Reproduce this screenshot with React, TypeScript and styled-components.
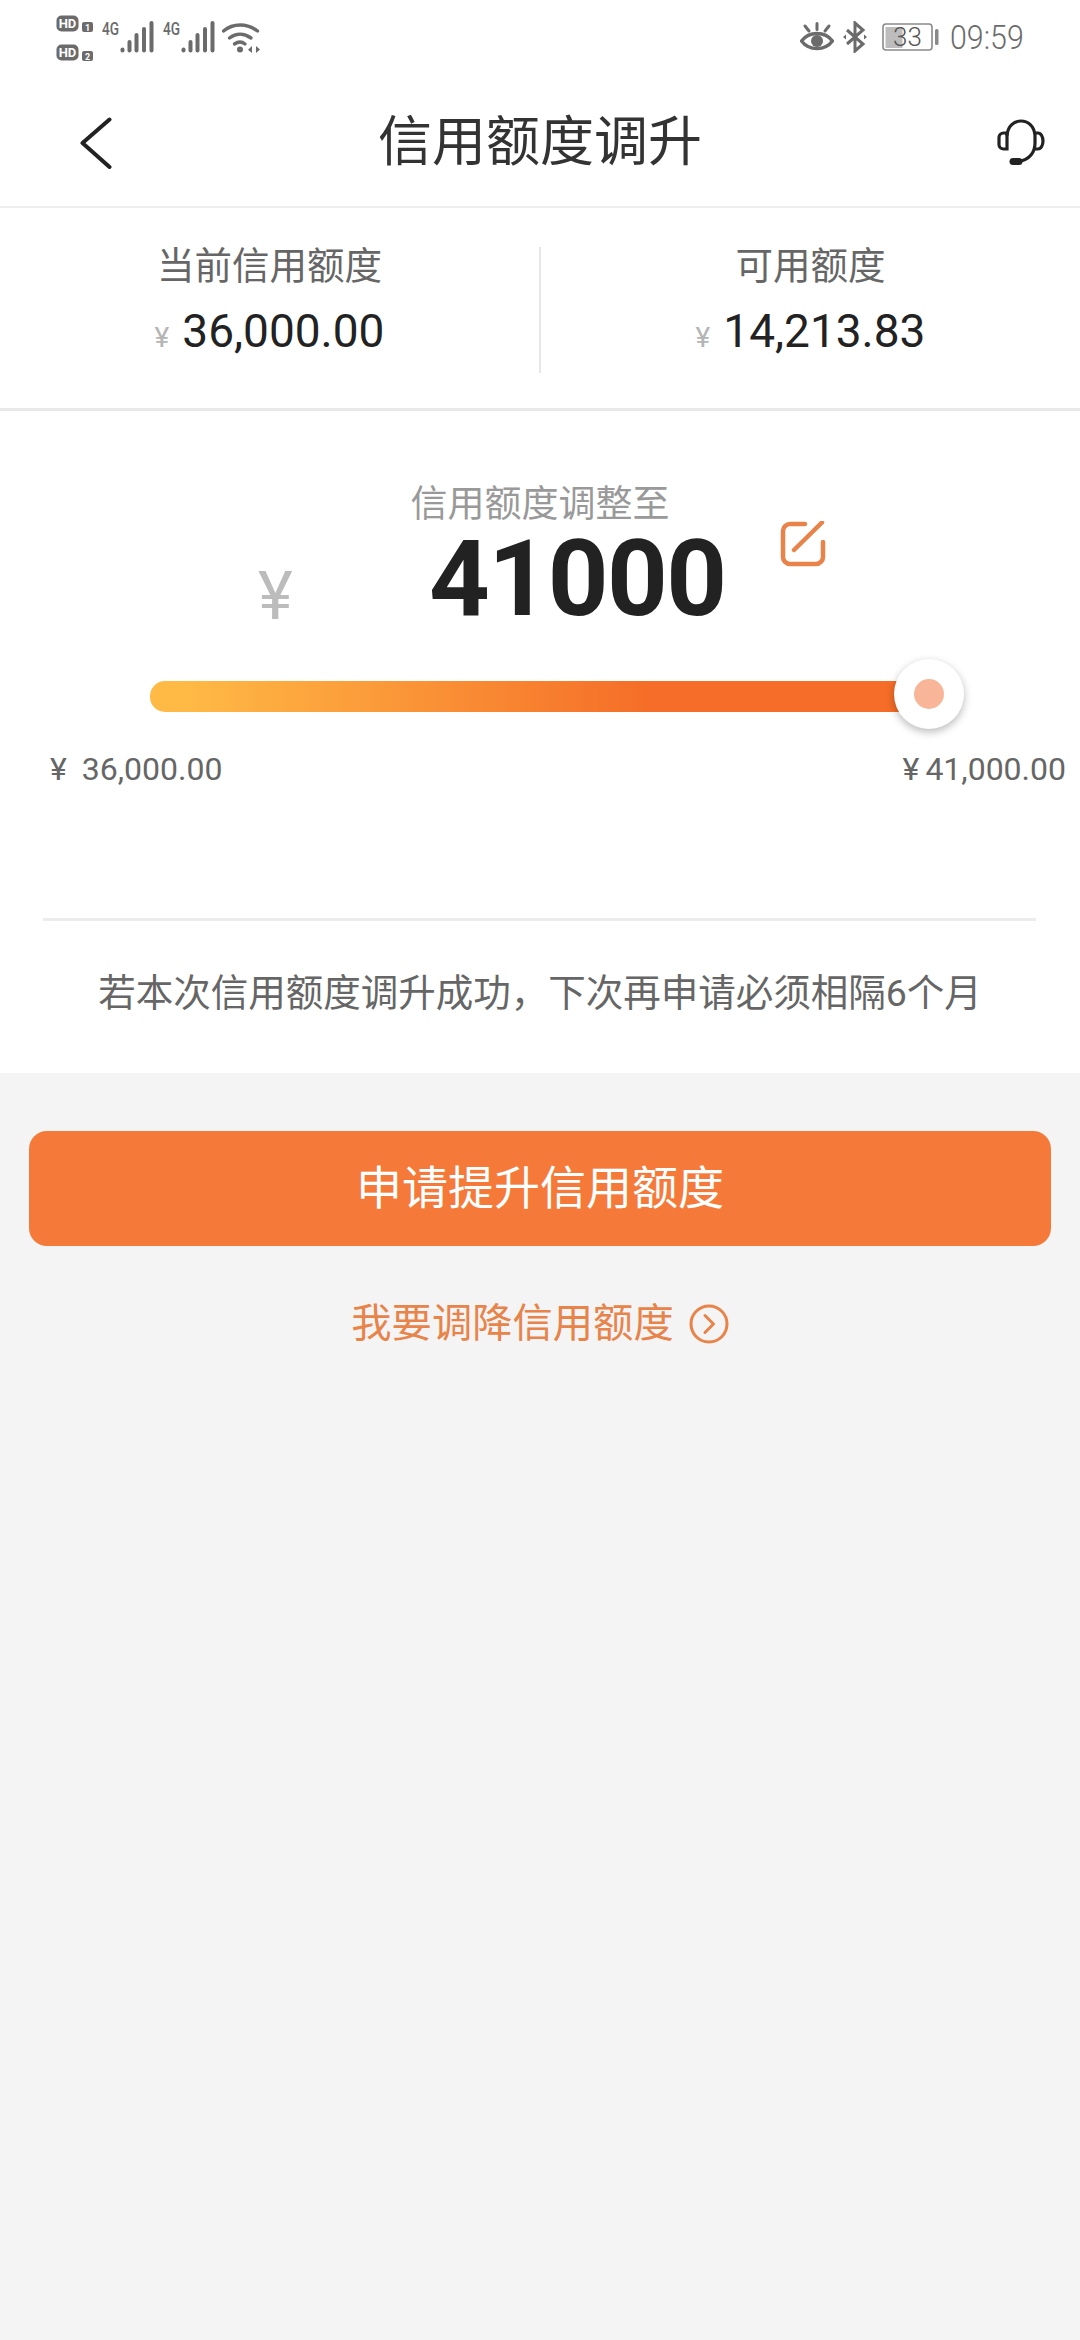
import React from "react";
import styled, { createGlobalStyle } from "styled-components";

const CJK = `Roboto, "Noto Sans CJK SC", sans-serif`;
const StatusGray = "#6b6b6b";
const Orange = "#e8834a";

const GlobalStyle = createGlobalStyle`
  html, body {
    margin: 0;
    padding: 0;
    background: #f4f4f4;
    font-family: ${CJK};
  }
`;

const Page = styled.div`
  width: 1080px;
  min-height: 2340px;
  background: #f4f4f4;
  display: flex;
  flex-direction: column;
`;

const TopArea = styled.header`
  background: #fff;
`;

const StatusBar = styled.div`
  height: 80px;
  display: flex;
  justify-content: space-between;
  padding: 0 58px 0 56px;
  box-sizing: border-box;
`;

const StatusGroup = styled.div`
  display: flex;
  align-items: flex-start;
  padding-top: 15px;
`;

const StatusRight = styled(StatusGroup)`
  padding-top: 21px;
`;

const Clock = styled.span`
  display: inline-block;
  width: 72px;
  margin-left: 10px;
  font-size: 33px;
  line-height: 34px;
  font-weight: 300;
  color: ${StatusGray};
  transform: scaleX(0.92);
  transform-origin: left center;
  white-space: nowrap;
`;

const NavBar = styled.div`
  height: 128px;
  display: grid;
  grid-template-columns: 1fr auto 1fr;
  align-items: center;
  padding: 0 35px 0 80px;
  box-sizing: border-box;
  border-bottom: 2px solid #eeeeee;
`;

const NavTitle = styled.h1`
  margin: 0;
  padding-right: 45px;
  font-size: 54px;
  line-height: 70px;
  font-weight: 400;
  color: #333;
`;

const NavAction = styled.div<{ $end?: boolean }>`
  display: flex;
  justify-content: ${(p) => (p.$end ? "flex-end" : "flex-start")};
`;

const Summary = styled.section`
  height: 203px;
  display: flex;
  align-items: flex-start;
  background: #fff;
  box-sizing: border-box;
  border-bottom: 3px solid #e8e8e8;
`;

const StatColumn = styled.div`
  flex: 1;
  padding-top: 33px;
  display: flex;
  flex-direction: column;
  align-items: center;
  gap: 15px;
`;

const StatDivider = styled.div`
  width: 2px;
  height: 126px;
  margin-top: 39px;
  background: #e6e6e6;
`;

const StatLabel = styled.div`
  font-size: 37.5px;
  line-height: 50px;
  color: #666;
`;

const StatValue = styled.div`
  display: flex;
  align-items: baseline;
  gap: 13px;
  font-size: 46px;
  line-height: 50px;
  color: #222;
`;

const SmallYen = styled.span`
  font-size: 28px;
  color: #b5b5b5;
`;

const Hero = styled.section`
  background: #fff;
  padding: 72px 0 55px;
  display: flex;
  flex-direction: column;
`;

const HeroLabel = styled.div`
  text-align: center;
  font-size: 37px;
  line-height: 43px;
  color: #999;
`;

const AmountRow = styled.div`
  display: flex;
  align-items: flex-start;
  padding-left: 258px;
  height: 106px;
`;

const AmountYen = styled.span`
  margin-top: 38px;
  width: 35px;
  font-size: 66px;
  line-height: 66px;
  color: #bcbcbc;
`;

const AmountValue = styled.span`
  margin-left: 136px;
  font-size: 106px;
  line-height: 106px;
  font-weight: 700;
  letter-spacing: -1.5px;
  color: #222;
`;

const EditButton = styled.div`
  margin: -5px 0 0 54px;
  line-height: 0;
`;

const Slider = styled.div`
  margin: 49px 0 0 150px;
  width: 770px;
  height: 31px;
  position: relative;
  border-radius: 15px 0 0 15px;
  background: linear-gradient(90deg, #ffb945 5%, #f56d28 65%);
`;

const SliderThumb = styled.div`
  position: absolute;
  left: 744px;
  top: -22px;
  width: 70px;
  height: 70px;
  border-radius: 50%;
  background: #fff;
  box-shadow: 0 3px 8px rgba(0, 0, 0, 0.28);
  display: flex;
  align-items: center;
  justify-content: center;

  &::after {
    content: "";
    width: 30px;
    height: 30px;
    border-radius: 50%;
    background: #f8b598;
  }
`;

const RangeRow = styled.div`
  display: flex;
  justify-content: space-between;
  margin-top: 37px;
  padding: 0 14px 0 50px;
  font-size: 32px;
  line-height: 40px;
  color: #666;
`;

const RangeLabel = styled.span<{ $gap: number }>`
  display: flex;
  gap: ${(p) => p.$gap}px;
`;

const HeroRule = styled.div`
  height: 3px;
  margin: 129px 44px 0 43px;
  background: #ececec;
`;

const Note = styled.p`
  margin: 47px 0 0;
  text-align: center;
  font-size: 37.5px;
  line-height: 50px;
  color: #666;
`;

const Actions = styled.section`
  padding: 58px 29px 0 29px;
  display: flex;
  flex-direction: column;
  align-items: stretch;
`;

const SubmitButton = styled.button`
  height: 115px;
  border: 0;
  border-radius: 18px;
  background: #f57a3a;
  color: #fff;
  font-family: inherit;
  font-size: 46px;
  padding: 0 0 10px;
`;

const DowngradeLink = styled.a`
  margin-top: 53px;
  display: flex;
  align-items: center;
  justify-content: center;
  gap: 15px;
  font-size: 40.3px;
  line-height: 50px;
  color: ${Orange};
`;

const HdIcon = () => (
  <svg width="40" height="46" viewBox="0 0 40 46">
    {[0, 29].map((y, i) => (
      <g key={y}>
        <rect x="0.5" y={y + 0.5} width="22" height="16" rx="5" fill={StatusGray} />
        <text x="11.5" y={y + 13} textAnchor="middle" fontSize="13" fontWeight="700" fontFamily="Roboto" fill="#fff">HD</text>
        <rect x="26" y={y + 7} width="11" height="10" rx="2" fill={StatusGray} />
        <text x="31.5" y={y + 15.5} textAnchor="middle" fontSize="9" fontWeight="700" fontFamily="Roboto" fill="#fff">{i + 1}</text>
      </g>
    ))}
  </svg>
);

const SignalIcon = ({ offset }: { offset: number }) => (
  <svg width="52" height="38" viewBox="0 0 52 38" style={{ marginLeft: offset }}>
    <text x="0" y="20" fontSize="18" fontWeight="500" fontFamily="Roboto" fill={StatusGray} textLength="17" lengthAdjust="spacingAndGlyphs">4G</text>
    <g stroke={StatusGray} strokeWidth="4" strokeLinecap="round">
      <path d="M20.5 34.500v1" />
      <path d="M27.5 27v8.500" />
      <path d="M34.5 20v15.500" />
      <path d="M42 14v21.500" />
      <path d="M49.500 8v27.500" />
    </g>
  </svg>
);

const WifiIcon = () => (
  <svg width="38" height="32" viewBox="0 0 38 32" style={{ marginLeft: 7, marginTop: 7 }}>
    <g fill="none" stroke={StatusGray} strokeWidth="3.4" strokeLinecap="round">
      <path d="M1.5 9C11 1 25 1 35.500 9" />
      <path d="M7.5 16C14 11 22 11 29 16" />
      <path d="M12.5 22C16 19.500 20 19.500 23 22" />
    </g>
    <circle cx="18" cy="27.500" r="3" fill={StatusGray} />
    <path d="M30 24v7l-4-3.200zM34 24v7l4-3.500z" fill={StatusGray} />
  </svg>
);

const EyeIcon = () => (
  <svg width="34" height="30" viewBox="0 0 34 30" style={{ marginTop: 1 }}>
    <path d="M1.5 19C9 9 25 9 32.500 19C25 29 9 29 1.500 19Z" fill="none" stroke={StatusGray} strokeWidth="3.4" />
    <circle cx="17" cy="19" r="6" fill={StatusGray} />
    <g stroke={StatusGray} strokeWidth="3" strokeLinecap="round">
      <path d="M17 1.500v6M5 4l4 5M29 4l-4 5" />
    </g>
  </svg>
);

const BluetoothIcon = () => (
  <svg width="24" height="32" viewBox="0 0 24 32" style={{ marginLeft: 9 }}>
    <path d="M4 9l16 14-8 7V2l8 7L4 23" fill="none" stroke={StatusGray} strokeWidth="3" />
    <path d="M0 16l3-2.500v5zM24 16l-3-2.500v5z" fill={StatusGray} />
  </svg>
);

const BatteryIcon = () => (
  <svg width="58" height="28" viewBox="0 0 58 28" style={{ marginLeft: 15, marginTop: 2 }}>
    <rect x="1" y="1" width="49" height="26" rx="3" fill="#fff" stroke="#8a8a8a" strokeWidth="1.6" />
    <rect x="3.5" y="4" width="17" height="21" fill="#bdbdbd" />
    <text x="25.500" y="23" textAnchor="middle" fontSize="26" fontWeight="300" fontFamily="Roboto" fill="#555">33</text>
    <rect x="53" y="6" width="3.500" height="16" rx="1.500" fill="#8a8a8a" />
  </svg>
);

const BackIcon = () => (
  <svg width="32" height="52" viewBox="0 0 32 52">
    <path d="M29.500 2.500L2.500 26l27 24" fill="none" stroke="#222" strokeWidth="4" strokeLinecap="round" strokeLinejoin="round" />
  </svg>
);

const HeadsetIcon = () => (
  <svg width="48" height="48" viewBox="0 0 48 48">
    <g fill="none" stroke="#222" strokeWidth="3.2" strokeLinecap="round">
      <path d="M10 16C11 7 17 2 24 2C31 2 37 7 38 16V24C38 33 33 41 21 42.500" />
      <path d="M10 14H6.500A4.500 4.500 0 0 0 2 18.500V25.500A4.500 4.500 0 0 0 6.500 30H10Z" />
      <path d="M38 14H41C44 14 46 18 46 22C46 26 44 30 41 30H38" />
    </g>
    <path d="M16 42.500h6" stroke="#222" strokeWidth="7" strokeLinecap="round" />
  </svg>
);

const EditIcon = () => (
  <svg width="46" height="46" viewBox="0 0 46 46">
    <g fill="none" stroke={Orange} strokeWidth="4.5" strokeLinecap="round">
      <path d="M25 3H10A7 7 0 0 0 3 10V36A7 7 0 0 0 10 43H36A7 7 0 0 0 43 36V21" />
      <path d="M14 29L42 1.500" />
    </g>
  </svg>
);

const ChevronCircleIcon = () => (
  <svg width="40" height="40" viewBox="0 0 40 40">
    <circle cx="20" cy="20" r="18" fill="none" stroke={Orange} strokeWidth="3" />
    <path d="M16 11.500L24.500 20L16 28.500" fill="none" stroke={Orange} strokeWidth="3" strokeLinecap="round" strokeLinejoin="round" />
  </svg>
);

const App = () => (
  <Page>
    <GlobalStyle />
    <TopArea>
      <StatusBar>
        <StatusGroup>
          <HdIcon />
          <SignalIcon offset={6} />
          <SignalIcon offset={9} />
          <WifiIcon />
        </StatusGroup>
        <StatusRight>
          <EyeIcon />
          <BluetoothIcon />
          <BatteryIcon />
          <Clock>09:59</Clock>
        </StatusRight>
      </StatusBar>
      <NavBar>
        <NavAction>
          <BackIcon />
        </NavAction>
        <NavTitle>信用额度调升</NavTitle>
        <NavAction $end>
          <HeadsetIcon />
        </NavAction>
      </NavBar>
    </TopArea>

    <Summary>
      <StatColumn>
        <StatLabel>当前信用额度</StatLabel>
        <StatValue>
          <SmallYen>¥</SmallYen>
          36,000.00
        </StatValue>
      </StatColumn>
      <StatDivider />
      <StatColumn>
        <StatLabel>可用额度</StatLabel>
        <StatValue>
          <SmallYen>¥</SmallYen>
          14,213.83
        </StatValue>
      </StatColumn>
    </Summary>

    <Hero>
      <HeroLabel>信用额度调整至</HeroLabel>
      <AmountRow>
        <AmountYen>¥</AmountYen>
        <AmountValue>41000</AmountValue>
        <EditButton>
          <EditIcon />
        </EditButton>
      </AmountRow>
      <Slider>
        <SliderThumb />
      </Slider>
      <RangeRow>
        <RangeLabel $gap={15}>
          <span>¥</span>
          <span>36,000.00</span>
        </RangeLabel>
        <RangeLabel $gap={6}>
          <span>¥</span>
          <span>41,000.00</span>
        </RangeLabel>
      </RangeRow>
      <HeroRule />
      <Note>若本次信用额度调升成功，下次再申请必须相隔6个月</Note>
    </Hero>

    <Actions>
      <SubmitButton>申请提升信用额度</SubmitButton>
      <DowngradeLink>
        我要调降信用额度
        <ChevronCircleIcon />
      </DowngradeLink>
    </Actions>
  </Page>
);

export default App;
